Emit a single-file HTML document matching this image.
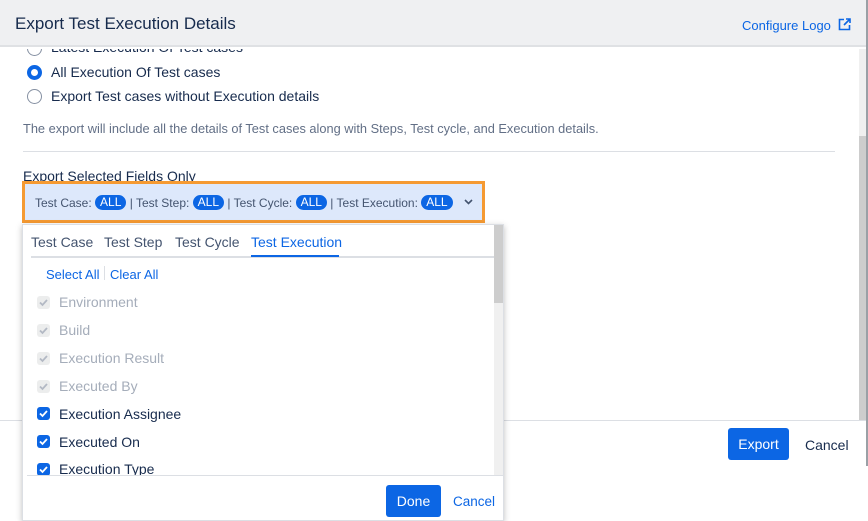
<!DOCTYPE html>
<html><head><style>
*{box-sizing:border-box;margin:0;padding:0}
body{width:868px;height:521px;position:relative;overflow:hidden;background:#fff;font-family:"Liberation Sans",sans-serif;color:#172b4d;font-size:14px}
.abs{position:absolute}
.hdr{left:0;top:0;width:866px;height:47px;background:#eff0f2;border-bottom:2px solid #dfe1e4}
.title{left:15px;top:14px;font-size:17px;color:#172b4d}
.cfg{left:742px;top:18px;font-size:13px;color:#0c66e4}
.radio{width:15px;height:15px;border-radius:50%;border:1px solid #8590a2;background:#fff}
.radio.on{border:4.5px solid #0c66e4}
.lbl{font-size:14px;color:#172b4d}
.pill{display:inline-block;background:#0c66e4;color:#fff;border-radius:9px;padding:0 5px;font-size:12px;line-height:15px;vertical-align:1px}
.cb{width:13px;height:13px;border-radius:3px;background:#0c66e4}
.cb.dis{background:#eceded}
.cb svg{display:block}
.item{left:59px;font-size:14px}
</style></head><body>
<div class="abs hdr"></div>
<div class="abs title">Export Test Execution Details</div>
<div class="abs cfg">Configure Logo <svg width="13" height="13" viewBox="0 0 13 13" style="vertical-align:-1px;margin-left:3px"><path d="M6 1.5H1.5v10h10V7" fill="none" stroke="#0c66e4" stroke-width="1.6"/><path d="M8 1h4v4M12 1L6 7" fill="none" stroke="#0c66e4" stroke-width="1.6"/></svg></div>
<div class="abs" style="left:859px;top:49px;width:7px;height:371px;background:#f0f0f0"></div>
<div class="abs" style="left:859px;top:136px;width:7px;height:284px;background:#cdcdcd"></div>
<div class="abs" style="left:866px;top:0;width:2px;height:466px;background:#9aa0a6"></div>
<div class="abs" style="left:0;top:49px;width:858px;height:8px;overflow:hidden"><div class="abs radio" style="left:27px;top:-8px"></div><div class="abs lbl" style="left:51px;top:-10px">Latest Execution Of Test cases</div></div>
<div class="abs radio on" style="left:27px;top:65px"></div>
<div class="abs lbl" style="left:51px;top:64px">All Execution Of Test cases</div>
<div class="abs radio" style="left:27px;top:89px"></div>
<div class="abs lbl" style="left:51px;top:88px">Export Test cases without Execution details</div>
<div class="abs" style="left:23px;top:121px;font-size:12.8px;color:#626f86">The export will include all the details of Test cases along with Steps, Test cycle, and Execution details.</div>
<div class="abs" style="left:23px;top:151px;width:812px;height:1px;background:#dcdfe4"></div>
<div class="abs lbl" style="left:23px;top:168px">Export Selected Fields Only</div>
<div class="abs" style="left:22px;top:181px;width:463px;height:42px;border:3px solid #f59a32;background:#dde8fb"></div>
<div class="abs" style="left:35px;top:195px;font-size:12px;color:#44546f;white-space:nowrap">Test Case: <span class="pill">ALL</span> | Test Step: <span class="pill">ALL</span> | Test Cycle: <span class="pill">ALL</span> | Test Execution: <span class="pill">ALL</span></div>
<svg class="abs" style="left:464px;top:199px" width="9" height="6" viewBox="0 0 9 6"><path d="M1 1l3.5 3.5L8 1" fill="none" stroke="#44546f" stroke-width="1.6"/></svg>
<div class="abs" style="left:0;top:420px;width:866px;height:1px;background:#dcdfe4"></div>
<div class="abs" style="left:728px;top:428px;width:61px;height:32px;background:#0c66e4;border-radius:3px;color:#fff;font-size:14px;text-align:center;line-height:32px">Export</div>
<div class="abs lbl" style="left:805px;top:437px">Cancel</div>
<div class="abs" style="left:22px;top:224px;width:482px;height:297px;background:#fff;border:1px solid #dcdfe4;box-shadow:0 2px 6px rgba(0,0,0,.25)"></div>
<div class="abs" style="left:494px;top:225px;width:9px;height:250px;background:#f0f0f0"></div>
<div class="abs" style="left:494px;top:225px;width:9px;height:78px;background:#cdcdcd"></div>
<div class="abs" style="left:31px;top:256px;width:463px;height:2px;background:#dcdfe4"></div>
<div class="abs" style="left:31px;top:234px;font-size:14px;color:#44546f;white-space:nowrap">Test Case</div>
<div class="abs" style="left:104px;top:234px;font-size:14px;color:#44546f">Test Step</div>
<div class="abs" style="left:175px;top:234px;font-size:14px;color:#44546f">Test Cycle</div>
<div class="abs" style="left:251px;top:234px;font-size:14px;color:#0c66e4">Test Execution</div>
<div class="abs" style="left:251px;top:255px;width:88px;height:2px;background:#0c66e4"></div>
<div class="abs" style="left:46px;top:267px;font-size:13px;color:#0c66e4">Select All</div>
<div class="abs" style="left:104px;top:266px;width:1px;height:14px;background:#dcdfe4"></div>
<div class="abs" style="left:110px;top:267px;font-size:13px;color:#0c66e4">Clear All</div>
<div class="abs cb dis" style="left:37px;top:296px"><svg width="13" height="13"><path d="M3 6.5l2.5 2.5L10 4" fill="none" stroke="#b3b9c4" stroke-width="1.8"/></svg></div>
<div class="abs item" style="top:294px;color:#a5adba">Environment</div>
<div class="abs cb dis" style="left:37px;top:324px"><svg width="13" height="13"><path d="M3 6.5l2.5 2.5L10 4" fill="none" stroke="#b3b9c4" stroke-width="1.8"/></svg></div>
<div class="abs item" style="top:322px;color:#a5adba">Build</div>
<div class="abs cb dis" style="left:37px;top:352px"><svg width="13" height="13"><path d="M3 6.5l2.5 2.5L10 4" fill="none" stroke="#b3b9c4" stroke-width="1.8"/></svg></div>
<div class="abs item" style="top:350px;color:#a5adba">Execution Result</div>
<div class="abs cb dis" style="left:37px;top:380px"><svg width="13" height="13"><path d="M3 6.5l2.5 2.5L10 4" fill="none" stroke="#b3b9c4" stroke-width="1.8"/></svg></div>
<div class="abs item" style="top:378px;color:#a5adba">Executed By</div>
<div class="abs cb" style="left:37px;top:407px"><svg width="13" height="13"><path d="M3 6.5l2.5 2.5L10 4" fill="none" stroke="#fff" stroke-width="1.8"/></svg></div>
<div class="abs item" style="top:406px">Execution Assignee</div>
<div class="abs cb" style="left:37px;top:435px"><svg width="13" height="13"><path d="M3 6.5l2.5 2.5L10 4" fill="none" stroke="#fff" stroke-width="1.8"/></svg></div>
<div class="abs item" style="top:434px">Executed On</div>
<div class="abs" style="left:23px;top:460px;width:470px;height:15px;overflow:hidden">
<div class="abs cb" style="left:14px;top:3px"><svg width="13" height="13"><path d="M3 6.5l2.5 2.5L10 4" fill="none" stroke="#fff" stroke-width="1.8"/></svg></div>
<div class="abs item" style="left:36px;top:1px">Execution Type</div></div>
<div class="abs" style="left:27px;top:475px;width:476px;height:1px;background:#dcdfe4"></div>
<div class="abs" style="left:386px;top:485px;width:55px;height:32px;background:#0c66e4;border-radius:3px;color:#fff;font-size:14px;text-align:center;line-height:32px">Done</div>
<div class="abs" style="left:453px;top:494px;font-size:13.5px;color:#0c66e4">Cancel</div>
</body></html>
